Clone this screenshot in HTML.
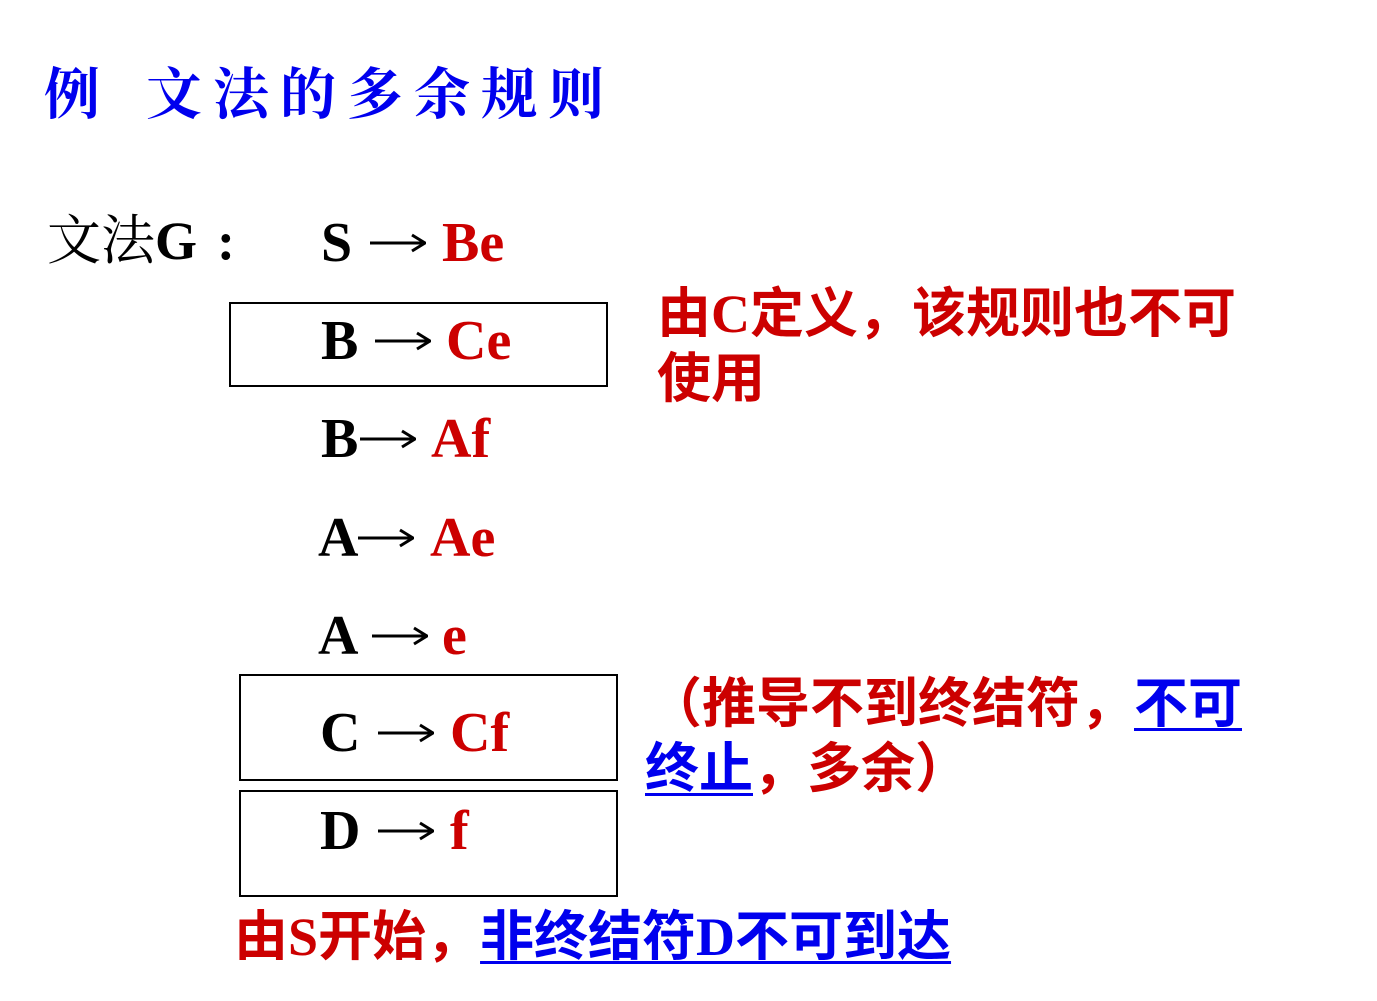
<!DOCTYPE html>
<html><head><meta charset="utf-8"><style>
html,body{margin:0;padding:0;background:#fff;width:1377px;height:1001px;overflow:hidden;position:relative}
.a{position:absolute;white-space:nowrap;line-height:1}
.t{font-family:"Liberation Serif","Noto Serif CJK SC",serif;color:#0000ee;font-size:56px;font-weight:bold}
.r{font-family:"Liberation Serif","Noto Serif CJK SC",serif;font-weight:bold;font-size:56px;color:#000}
.k{color:#cc0000}
.box{position:absolute;border:2px solid #000;box-sizing:border-box}
.red{font-family:"Liberation Serif","Noto Sans CJK SC",sans-serif;font-weight:bold;font-size:54px;color:#cc0000}
.blue{color:#0000ee;text-decoration:underline;text-decoration-thickness:3px;text-underline-offset:6px}
svg.ar{position:absolute}
</style></head><body>
<div class="a t" style="left:44px;top:68px">例</div>
<div class="a t" style="left:146px;top:68px;letter-spacing:11px">文法的多余规则</div>
<div class="a" style="left:47px;top:214px;font-family:'Liberation Serif','Noto Serif CJK SC',serif;font-size:54px">文法<b>G</b></div>
<div class="a" style="left:217px;top:214px;font-family:'Liberation Serif',serif;font-size:54px;font-weight:bold">:</div>
<div class="box" style="left:229px;top:302px;width:379px;height:85px"></div>
<div class="box" style="left:239px;top:674px;width:379px;height:107px"></div>
<div class="box" style="left:239px;top:790px;width:379px;height:107px"></div>

<div class="a r" style="left:321px;top:215px">S</div>
<svg class="ar" style="left:370px;top:233px" width="56" height="20"><line x1="0" y1="10" x2="52" y2="10" stroke="#000" stroke-width="3"/><path d="M42 2 L55 10 L42 18" fill="none" stroke="#000" stroke-width="3"/></svg>
<div class="a r k" style="left:442px;top:215px">Be</div>

<div class="a r" style="left:321px;top:313px">B</div>
<svg class="ar" style="left:375px;top:331px" width="56" height="20"><line x1="0" y1="10" x2="52" y2="10" stroke="#000" stroke-width="3"/><path d="M42 2 L55 10 L42 18" fill="none" stroke="#000" stroke-width="3"/></svg>
<div class="a r k" style="left:446px;top:313px">Ce</div>

<div class="a r" style="left:321px;top:411px">B</div>
<svg class="ar" style="left:360px;top:429px" width="56" height="20"><line x1="0" y1="10" x2="52" y2="10" stroke="#000" stroke-width="3"/><path d="M42 2 L55 10 L42 18" fill="none" stroke="#000" stroke-width="3"/></svg>
<div class="a r k" style="left:431px;top:411px">Af</div>

<div class="a r" style="left:318px;top:510px">A</div>
<svg class="ar" style="left:358px;top:528px" width="56" height="20"><line x1="0" y1="10" x2="52" y2="10" stroke="#000" stroke-width="3"/><path d="M42 2 L55 10 L42 18" fill="none" stroke="#000" stroke-width="3"/></svg>
<div class="a r k" style="left:430px;top:510px">Ae</div>

<div class="a r" style="left:318px;top:608px">A</div>
<svg class="ar" style="left:372px;top:626px" width="56" height="20"><line x1="0" y1="10" x2="52" y2="10" stroke="#000" stroke-width="3"/><path d="M42 2 L55 10 L42 18" fill="none" stroke="#000" stroke-width="3"/></svg>
<div class="a r k" style="left:442px;top:608px">e</div>

<div class="a r" style="left:320px;top:705px">C</div>
<svg class="ar" style="left:378px;top:723px" width="56" height="20"><line x1="0" y1="10" x2="52" y2="10" stroke="#000" stroke-width="3"/><path d="M42 2 L55 10 L42 18" fill="none" stroke="#000" stroke-width="3"/></svg>
<div class="a r k" style="left:450px;top:705px">Cf</div>

<div class="a r" style="left:320px;top:803px">D</div>
<svg class="ar" style="left:378px;top:821px" width="56" height="20"><line x1="0" y1="10" x2="52" y2="10" stroke="#000" stroke-width="3"/><path d="M42 2 L55 10 L42 18" fill="none" stroke="#000" stroke-width="3"/></svg>
<div class="a r k" style="left:450px;top:803px">f</div>

<div class="a red" style="left:657px;top:287px">由C定义，该规则也不可</div>
<div class="a red" style="left:657px;top:352px">使用</div>
<div class="a red" style="left:648px;top:677px">（推导不到终结符，<span class="blue">不可</span></div>
<div class="a red" style="left:645px;top:742px"><span class="blue">终止</span>，多余）</div>
<div class="a red" style="left:234px;top:910px">由S开始，<span class="blue">非终结符D不可到达</span></div>
</body></html>
